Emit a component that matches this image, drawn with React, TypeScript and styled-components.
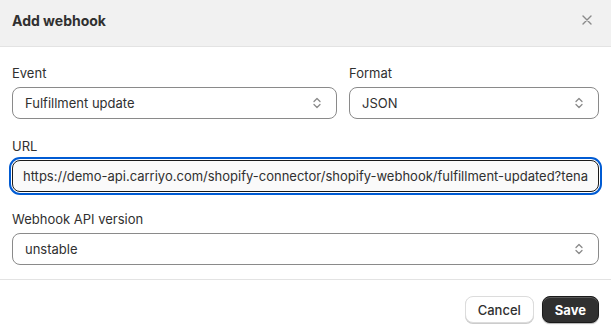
import React from "react";
import styled, { createGlobalStyle } from "styled-components";

const Global = createGlobalStyle`
  html, body {
    margin: 0;
    padding: 0;
    background: #ffffff;
  }
  body {
    font-family: Inter, "Noto Sans", "Liberation Sans", sans-serif;
    font-size: 13px;
    color: #303030;
  }
`;

const Modal = styled.div`
  width: 611px;
  display: flex;
  flex-direction: column;
  background: #ffffff;
`;

const Header = styled.div`
  display: flex;
  flex-shrink: 0;
  align-items: center;
  justify-content: space-between;
  box-sizing: border-box;
  height: 47px;
  padding: 0 12px 6px 12px;
  background: #f1f1f1;
  border-bottom: 1px solid #e3e3e3;
`;

const Title = styled.h2`
  margin: 0;
  font-size: 14px;
  font-weight: 650;
  color: #303030;
`;

const Close = styled.button`
  display: flex;
  align-items: center;
  justify-content: center;
  width: 20px;
  height: 20px;
  padding: 0;
  margin-right: 2px;
  border: none;
  background: transparent;
  color: #8a8a8a;
`;

const Body = styled.div`
  display: flex;
  flex-shrink: 0;
  flex-direction: column;
  gap: 17px;
  padding: 16px 12px 14px 12px;
  border-bottom: 1px solid #e3e3e3;
`;

const Row = styled.div`
  display: flex;
  gap: 12px;
`;

const Field = styled.div<{ $width?: number }>`
  display: flex;
  flex-direction: column;
  gap: 4px;
  flex: ${(p) => (p.$width ? `0 0 ${p.$width}px` : "1 1 0")};
  min-width: 0;
`;

const Label = styled.label`
  line-height: 20px;
  font-size: 13px;
  color: #303030;
`;

const SelectBox = styled.div`
  display: flex;
  align-items: center;
  justify-content: space-between;
  height: 32px;
  box-sizing: border-box;
  padding: 0 14px 0 12px;
  border: 1px solid #8a8a8a;
  border-radius: 8px;
  background: #ffffff;
  color: #303030;
  font-size: 13px;
`;

const Input = styled.input`
  height: 32px;
  box-sizing: border-box;
  width: 100%;
  padding: 0 10px;
  margin: 0;
  border: 1px solid #1a1a1a;
  border-radius: 8px;
  background: #fafafa;
  color: #303030;
  font-family: inherit;
  font-size: 13px;
  outline: 2px solid #005bd3;
  outline-offset: 1px;
`;

const Footer = styled.div`
  display: flex;
  flex-shrink: 0;
  justify-content: flex-end;
  align-items: center;
  gap: 8px;
  padding: 16px 12px;
`;

const Button = styled.button<{ $primary?: boolean }>`
  height: 27px;
  padding: 0 12px;
  border-radius: 8px;
  font-family: inherit;
  font-size: 13px;
  font-weight: ${(p) => (p.$primary ? 650 : 500)};
  color: ${(p) => (p.$primary ? "#ffffff" : "#303030")};
  background: ${(p) => (p.$primary ? "#303030" : "#ffffff")};
  border: 1px solid ${(p) => (p.$primary ? "#1a1a1a" : "#dcdcdc")};
  box-shadow: ${(p) =>
    p.$primary
      ? "inset 0 1px 0 rgba(255,255,255,0.2), 0 1px 1px rgba(0,0,0,0.3)"
      : "0 1px 0 #cccccc"};
`;

function Chevron() {
  return (
    <svg width="10" height="14" viewBox="0 0 10 14" fill="none">
      <path d="M2 5.5 L5 2.5 L8 5.5" stroke="#8a8a8a" strokeWidth="1.3" strokeLinecap="round" strokeLinejoin="round" />
      <path d="M2 8.5 L5 11.5 L8 8.5" stroke="#8a8a8a" strokeWidth="1.3" strokeLinecap="round" strokeLinejoin="round" />
    </svg>
  );
}

function Select({ value }: { value: string }) {
  return (
    <SelectBox>
      <span>{value}</span>
      <Chevron />
    </SelectBox>
  );
}

export default function App() {
  return (
    <>
      <Global />
      <Modal>
        <Header>
          <Title>Add webhook</Title>
          <Close>
            <svg width="10" height="10" viewBox="0 0 10 10">
              <path d="M1 1 L9 9 M9 1 L1 9" stroke="#8a8a8a" strokeWidth="1.4" strokeLinecap="round" />
            </svg>
          </Close>
        </Header>
        <Body>
          <Row>
            <Field>
              <Label>Event</Label>
              <Select value="Fulfillment update" />
            </Field>
            <Field $width={250}>
              <Label>Format</Label>
              <Select value="JSON" />
            </Field>
          </Row>
          <Field>
            <Label>URL</Label>
            <Input
              readOnly
              value="https://demo-api.carriyo.com/shopify-connector/shopify-webhook/fulfillment-updated?tenant=demo"
            />
          </Field>
          <Field>
            <Label>Webhook API version</Label>
            <Select value="unstable" />
          </Field>
        </Body>
        <Footer>
          <Button>Cancel</Button>
          <Button $primary>Save</Button>
        </Footer>
      </Modal>
    </>
  );
}
